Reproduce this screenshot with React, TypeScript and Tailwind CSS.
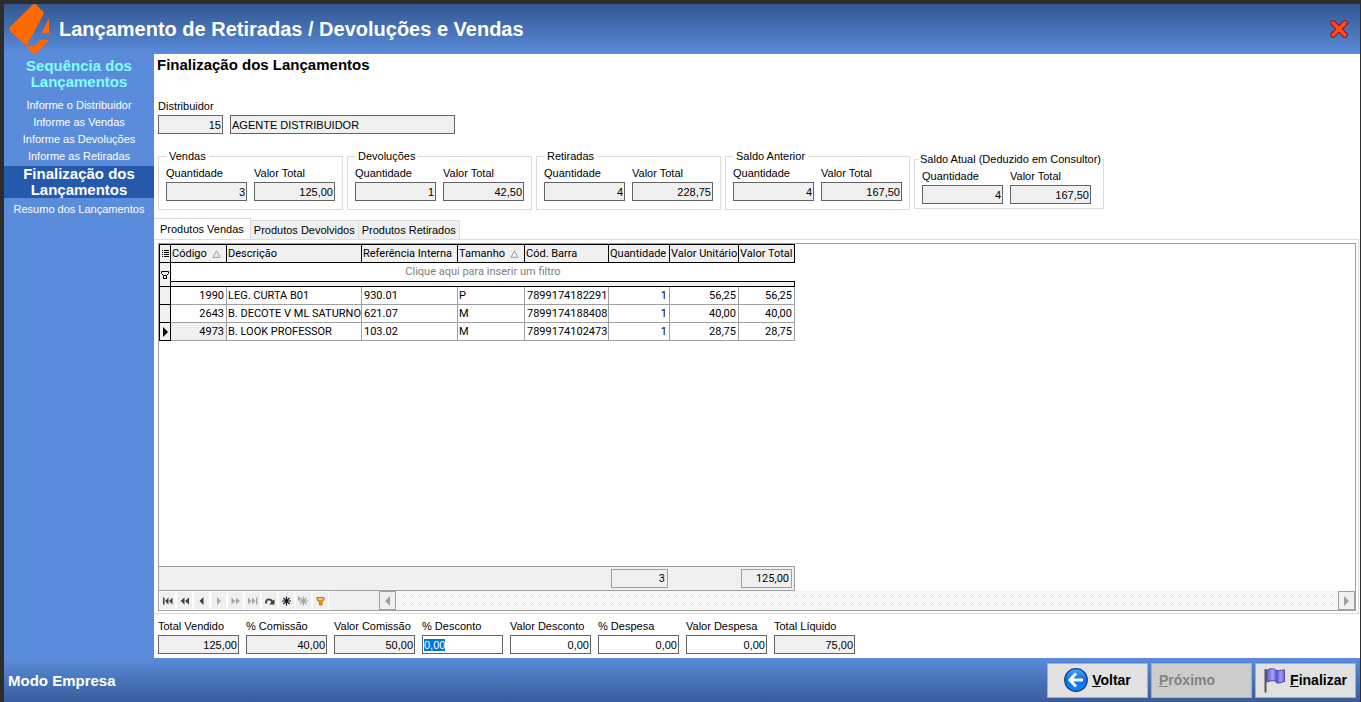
import { useEffect, useId, useRef, useState } from "react";
import type { ReactNode } from "react";

type FieldProps = {
  label: string;
  value: string;
  editable?: boolean;
  selected?: boolean;
};

type Product = {
  code: string;
  description: string;
  reference: string;
  size: string;
  barcode: string;
  quantity: string;
  unit: string;
  total: string;
};

const stepsBefore = [
  "Informe o Distribuidor",
  "Informe as Vendas",
  "Informe as Devoluções",
  "Informe as Retiradas",
];

const groups = [
  { title: "Vendas", quantity: "3", total: "125,00" },
  { title: "Devoluções", quantity: "1", total: "42,50" },
  { title: "Retiradas", quantity: "4", total: "228,75" },
  { title: "Saldo Anterior", quantity: "4", total: "167,50" },
];

const tabs = ["Produtos Vendas", "Produtos Devolvidos", "Produtos Retirados"];

const products: Product[] = [
  {
    code: "1990",
    description: "LEG. CURTA B01",
    reference: "930.01",
    size: "P",
    barcode: "7899174182291",
    quantity: "1",
    unit: "56,25",
    total: "56,25",
  },
  {
    code: "2643",
    description: "B. DECOTE V ML SATURNO",
    reference: "621.07",
    size: "M",
    barcode: "7899174188408",
    quantity: "1",
    unit: "40,00",
    total: "40,00",
  },
  {
    code: "4973",
    description: "B. LOOK PROFESSOR",
    reference: "103.02",
    size: "M",
    barcode: "7899174102473",
    quantity: "1",
    unit: "28,75",
    total: "28,75",
  },
];

const totals: FieldProps[] = [
  { label: "Total Vendido", value: "125,00" },
  { label: "% Comissão", value: "40,00" },
  { label: "Valor Comissão", value: "50,00" },
  { label: "% Desconto", value: "0,00", editable: true, selected: true },
  { label: "Valor Desconto", value: "0,00", editable: true },
  { label: "% Despesa", value: "0,00", editable: true },
  { label: "Valor Despesa", value: "0,00", editable: true },
  { label: "Total Líquido", value: "75,00" },
];

function Field({ label, value, editable, selected }: Readonly<FieldProps>) {
  const id = useId();
  const ref = useRef<HTMLInputElement>(null);

  useEffect(() => {
    if (selected) {
      ref.current?.focus();
      ref.current?.select();
    }
  }, [selected]);

  return (
    <div className="flex w-[81px] flex-col gap-px">
      <label htmlFor={id} className="whitespace-nowrap leading-4">
        {label}
      </label>
      <input
        id={id}
        ref={ref}
        defaultValue={value}
        readOnly={!editable}
        className={`h-[19px] w-full border border-[#646464] px-px leading-4 outline-none selection:bg-[#0078d7] selection:text-white ${
          editable ? "bg-white" : "bg-[#f0f0f0]"
        } ${selected ? "text-left" : "text-right"}`}
      />
    </div>
  );
}

function Logo() {
  return (
    <svg width="42" height="50" viewBox="0 0 42 50" fill="#ff6a00" aria-hidden="true">
      <path d="M23.500 .8Q25.500 -.8 27.500 .8L34 7.500Q35 9 34.500 10.500L17.500 42L1 27Q-.5 25 1 23Z" />
      <path d="M40 14V29.500H32.500Z" />
      <path d="M31 36H40L27.500 49Q25.500 50.500 23.500 49L17 42.300H24.500Q27.500 41 31 36Z" />
    </svg>
  );
}

function CloseIcon() {
  return (
    <svg width="18" height="18" viewBox="0 0 18 18" aria-hidden="true">
      <path d="M3 3L15 15M15 3L3 15" stroke="#a30d08" strokeWidth="5.600" strokeLinecap="round" />
      <path d="M3 3L15 15M15 3L3 15" stroke="#ff4a26" strokeWidth="3.600" strokeLinecap="round" />
    </svg>
  );
}

function BackIcon() {
  return (
    <svg width="24" height="24" viewBox="0 0 24 24" fill="none" aria-hidden="true">
      <defs>
        <linearGradient id="ball" x1="0" y1="0" x2="0" y2="1">
          <stop offset="0" stopColor="#4aa5f5" />
          <stop offset=".5" stopColor="#0d6fe0" />
          <stop offset="1" stopColor="#0a8cf0" />
        </linearGradient>
      </defs>
      <circle cx="12" cy="12" r="11.300" fill="url(#ball)" stroke="#0b3f94" strokeWidth="1.200" />
      <path d="M12 5.500L5.800 12L12 18.500M6.500 12H19" stroke="#fff" strokeWidth="3" />
    </svg>
  );
}

function FlagIcon() {
  return (
    <svg width="22" height="25" viewBox="0 0 22 25" aria-hidden="true">
      <defs>
        <linearGradient id="flag">
          <stop offset="0" stopColor="#5a52d0" />
          <stop offset=".35" stopColor="#a9a6ff" />
          <stop offset=".55" stopColor="#5a52d0" />
          <stop offset=".8" stopColor="#a09cfa" />
          <stop offset="1" stopColor="#6a64d8" />
        </linearGradient>
      </defs>
      <path
        d="M2.500 2.500Q6 0 9.500 .8Q11.500 1.200 12 2.500Q15 2.800 20.500 1.800V13.500Q16 15.500 12.500 15L11.500 13Q7 12 2.500 14Z"
        fill="url(#flag)"
        stroke="#3d3798"
        strokeWidth=".8"
      />
      <path d="M1.500 1V24.500" stroke="#555" strokeWidth="2" />
    </svg>
  );
}

function SortMark() {
  return (
    <svg width="9" height="8" viewBox="0 0 9 8" fill="none" aria-hidden="true">
      <path d="M4.500 .8L8 7.300H1Z" stroke="#a0a0a0" />
    </svg>
  );
}

const navButtons = [
  { name: "Primeiro", color: "#404040", path: "M1 1.500H2.500V8.500H1ZM6.500 1.500V8.500L3 5ZM10.500 1.500V8.500L7 5Z" },
  { name: "Página anterior", color: "#404040", path: "M5.500 1.500V8.500L1.500 5ZM10 1.500V8.500L6 5Z" },
  { name: "Anterior", color: "#404040", path: "M7.500 1V9L3.500 5Z" },
  { name: "Próximo", color: "#a8a8a8", path: "M4 1V9L8 5Z" },
  { name: "Próxima página", color: "#a8a8a8", path: "M1.500 1.500V8.500L5.500 5ZM6 1.500V8.500L10 5Z" },
  { name: "Último", color: "#a8a8a8", path: "M1 1.500V8.500L4.500 5ZM5 1.500V8.500L8.500 5ZM9 1.500H10.500V8.500H9Z" },
  { name: "Atualizar", color: "#404040", path: "M1 7.500Q1 2.500 5 2.500Q7.500 2.500 8.500 4.500L10.500 3.500V8.500H5.500L7.300 6Q6.500 4.200 4.800 4.200Q3 4.200 3 7.500Z" },
];

function Star({ color }: Readonly<{ color: string }>) {
  return (
    <path
      d="M5.500 .5V9.500M1 5H10M2.300 1.800L8.700 8.200M8.700 1.800L2.300 8.200"
      stroke={color}
      strokeWidth="1.200"
    />
  );
}

function NavButton({ name, children }: Readonly<{ name: string; children: ReactNode }>) {
  return (
    <button
      type="button"
      aria-label={name}
      className="flex w-[17px] items-center justify-center border border-white bg-[#f0f0f0]"
    >
      <svg width="11" height="10" viewBox="0 0 11 10" fill="none" aria-hidden="true">
        {children}
      </svg>
    </button>
  );
}

function ScrollButton({ name, path }: Readonly<{ name: string; path: string }>) {
  return (
    <button
      type="button"
      aria-label={name}
      className="flex w-[17px] items-center justify-center border border-[#a0a0a0] bg-[#f0f0f0]"
    >
      <svg width="7" height="10" viewBox="0 0 7 10" fill="#a0a0a0" aria-hidden="true">
        <path d={path} />
      </svg>
    </button>
  );
}

function ProductTable() {
  const head = "border-t border-r border-b border-black bg-[#f0f0f0] px-px text-left font-normal";
  const cell = "border-r border-b border-[#a0a0a0] py-0";

  return (
    <table className="w-[636px] table-fixed border-separate border-spacing-0 whitespace-nowrap leading-4">
      <colgroup>
        <col className="w-[12px]" />
        <col className="w-[56px]" />
        <col className="w-[135px]" />
        <col className="w-[96px]" />
        <col className="w-[67px]" />
        <col className="w-[84px]" />
        <col className="w-[61px]" />
        <col className="w-[69px]" />
        <col className="w-[56px]" />
      </colgroup>
      <thead>
        <tr className="h-[19px]">
          <th className="border border-black bg-[#f0f0f0] p-0" aria-label="Colunas">
            <svg width="10" height="10" viewBox="0 0 10 10" className="block" aria-hidden="true">
              <path d="M2 1.500H3M4 1.500H9M2 3.500H3M4 3.500H9M2 5.500H3M4 5.500H9M2 7.500H3M4 7.500H9" stroke="#000" />
            </svg>
          </th>
          <th className={head}>
            <span className="flex items-center justify-between pr-1">
              Código <SortMark />
            </span>
          </th>
          <th className={head}>Descrição</th>
          <th className={head}>Referência Interna</th>
          <th className={head}>
            <span className="flex items-center justify-between pr-1">
              Tamanho <SortMark />
            </span>
          </th>
          <th className={head}>Cód. Barra</th>
          <th className={head}>Quantidade</th>
          <th className={head}>Valor Unitário</th>
          <th className={head}>Valor Total</th>
        </tr>
      </thead>
      <tbody>
        <tr className="h-[19px]">
          <td rowSpan={2} className="border-r border-b border-l border-black bg-[#f0f0f0] p-0">
            <svg width="10" height="10" viewBox="0 0 10 10" fill="none" className="block" aria-hidden="true">
              <path d="M1.500 1.500H8.500V3.500L6.500 5.500H3.500L1.500 3.500ZM3.500 5.500V8.500H6.500V5.500" stroke="#000" />
            </svg>
          </td>
          <td colSpan={8} className="border-b border-black p-0 text-center text-[#808080]">
            Clique aqui para inserir um filtro
          </td>
        </tr>
        <tr className="h-[5px]">
          <td colSpan={8} className="border-r border-b border-black bg-[#f0f0f0] p-0" />
        </tr>
        {products.map((product, index) => {
          const current = index === products.length - 1;
          return (
            <tr key={product.code} className="h-[18px]">
              <td className="border-r border-b border-l border-black bg-[#f0f0f0] p-0">
                {current && (
                  <svg width="10" height="10" viewBox="0 0 10 10" className="block" aria-hidden="true">
                    <path d="M3 0V10L8 5Z" />
                  </svg>
                )}
              </td>
              <td className={`${cell} pr-0.5 text-right ${current ? "bg-[#f0f0f0]" : ""}`}>
                {product.code}
              </td>
              <td className={`${cell} pl-px`}>{product.description}</td>
              <td className={`${cell} pl-0.5`}>{product.reference}</td>
              <td className={`${cell} pl-px`}>{product.size}</td>
              <td className={`${cell} pl-0.5`}>{product.barcode}</td>
              <td className={`${cell} pr-0.5 text-right`}>{product.quantity}</td>
              <td className={`${cell} pr-0.5 text-right`}>{product.unit}</td>
              <td className={`${cell} pr-0.5 text-right`}>{product.total}</td>
            </tr>
          );
        })}
      </tbody>
    </table>
  );
}

export default function App() {
  const [activeTab, setActiveTab] = useState(tabs[0]);
  const bigButton =
    "flex h-[35px] w-[101px] items-center border border-[#adadad] text-[14px] font-bold";

  return (
    <div className="flex min-h-screen flex-col border-t-4 border-r border-l-4 border-[#2d2d2d] bg-[#5b8cdb] font-['Liberation_Sans',Arial,sans-serif] text-[11px] text-black">
      <header className="flex h-[50px] items-center justify-between bg-linear-to-b from-[#335791] to-[#5b8cdb] pr-3 pl-[5px]">
        <div className="flex items-center gap-2">
          <Logo />
          <h1 className="text-[20px] font-bold text-white">
            Lançamento de Retiradas / Devoluções e Vendas
          </h1>
        </div>
        <button type="button" aria-label="Fechar">
          <CloseIcon />
        </button>
      </header>

      <div className="flex flex-1">
        <nav className="w-[150px] shrink-0 pt-1 text-center text-white">
          <h2 className="px-4 text-[15px] leading-4 font-bold text-[#80ffff]">
            Sequência dos Lançamentos
          </h2>
          <ol className="pt-[7px]">
            {stepsBefore.map((step) => (
              <li key={step} className="leading-[17px]">
                {step}
              </li>
            ))}
            <li
              aria-current="step"
              className="mt-px bg-[#2459ab] px-4 text-[15px] leading-4 font-bold"
            >
              Finalização dos Lançamentos
            </li>
            <li className="pt-[3px] leading-[17px]">Resumo dos Lançamentos</li>
          </ol>
        </nav>

        <main className="flex min-w-0 flex-1 flex-col bg-white">
          <h2 className="px-[3px] pt-px text-[15px] leading-5 font-bold">
            Finalização dos Lançamentos
          </h2>

          <div className="mt-[23px] flex flex-col gap-px px-1">
            <label htmlFor="distributor" className="leading-4">
              Distribuidor
            </label>
            <div className="flex gap-[7px]">
              <input
                id="distributor"
                readOnly
                defaultValue="15"
                className="h-[19px] w-[65px] border border-[#646464] bg-[#f0f0f0] px-px text-right"
              />
              <input
                aria-label="Nome do distribuidor"
                readOnly
                defaultValue="AGENTE DISTRIBUIDOR"
                className="h-[19px] w-[225px] border border-[#646464] bg-[#f0f0f0] px-px"
              />
            </div>
          </div>

          <div className="mt-[15px] flex items-end gap-1 px-1">
            {groups.map((group) => (
              <fieldset key={group.title} className="w-[185px] border border-[#dcdcdc] px-[7px] pb-2">
                <legend className="px-[3px] leading-[15px]">{group.title}</legend>
                <div className="flex gap-[7px] pt-px">
                  <Field label="Quantidade" value={group.quantity} />
                  <Field label="Valor Total" value={group.total} />
                </div>
              </fieldset>
            ))}
            <fieldset className="mb-px w-[190px] border border-[#dcdcdc] pb-1">
              <legend className="ml-1 px-px leading-[15px] whitespace-nowrap">
                Saldo Atual (Deduzido em Consultor)
              </legend>
              <div className="flex gap-[7px] px-[7px] pt-px">
                <Field label="Quantidade" value="4" />
                <Field label="Valor Total" value="167,50" />
              </div>
            </fieldset>
          </div>

          <div role="tablist" className="mt-2 flex items-end">
            {tabs.map((tab) => (
              <button
                key={tab}
                type="button"
                role="tab"
                aria-selected={tab === activeTab}
                onClick={() => setActiveTab(tab)}
                className={`border-t border-r border-[#dcdcdc] whitespace-nowrap ${
                  tab === activeTab
                    ? "-mb-px h-[22px] bg-white px-1.5"
                    : "h-[19px] bg-[#f0f0f0] px-[3px]"
                }`}
              >
                {tab}
              </button>
            ))}
          </div>

          <div className="mr-px flex flex-1 flex-col border-t border-r border-b border-[#dcdcdc] pt-[3px] pr-0.5 pb-0.5 pl-1">
            <div className="flex flex-1 flex-col border border-[#a0a0a0] font-['Roboto','Liberation_Sans',sans-serif]">
              <div className="flex-1 overflow-x-auto">
                <ProductTable />
              </div>
              <div className="flex h-[25px] w-[636px] items-center justify-end gap-[73px] border-t border-r border-b border-[#a0a0a0] bg-[#f0f0f0] pr-0.5 text-right leading-[17px]">
                <output className="w-[57px] border border-[#a0a0a0] px-0.5">3</output>
                <output className="w-[51px] border border-[#a0a0a0] px-0.5">125,00</output>
              </div>
              <div className="flex h-[19px] bg-[repeating-conic-gradient(#ececec_0_25%,#ffffff_0_50%)] bg-[length:2px_2px]">
                <div className="flex w-[220px] bg-[#f0f0f0]">
                  {navButtons.map((button) => (
                    <NavButton key={button.name} name={button.name}>
                      <path d={button.path} fill={button.color} />
                    </NavButton>
                  ))}
                  <NavButton name="Inserir">
                    <Star color="#101020" />
                  </NavButton>
                  <NavButton name="Acrescentar">
                    <path d="M0 0V5L3 2.500Z" fill="#a0a0a0" />
                    <Star color="#a0a0a0" />
                  </NavButton>
                  <NavButton name="Filtrar">
                    <path d="M2 1.500H9V4L7 6V9H4.500V6L2 4Z" fill="#f58a1f" stroke="#e07000" />
                    <path d="M3.500 3H7.500" stroke="#fff" />
                  </NavButton>
                </div>
                <ScrollButton name="Rolar para a esquerda" path="M6 0V10L1 5Z" />
                <div className="flex-1" />
                <ScrollButton name="Rolar para a direita" path="M1 0V10L6 5Z" />
              </div>
            </div>
          </div>

          <div className="flex flex-wrap gap-[7px] p-1">
            {totals.map((field) => (
              <Field key={field.label} {...field} />
            ))}
          </div>
        </main>
      </div>

      <footer className="flex h-11 items-center justify-between bg-linear-to-b from-[#5b8cdb] to-[#385d9c] px-1">
        <span className="pt-0.5 text-[15px] font-bold text-white">Modo Empresa</span>
        <div className="flex gap-[3px]">
          <button type="button" className={`${bigButton} justify-center gap-1 bg-[#e1e1e1]`}>
            <BackIcon />
            <span className="pt-px">
              <u>V</u>oltar
            </span>
          </button>
          <button type="button" disabled className={`${bigButton} bg-[#cccccc] pl-[7px] text-[#838383]`}>
            <span className="pt-px">
              <u>P</u>róximo
            </span>
          </button>
          <button type="button" className={`${bigButton} justify-center gap-1 bg-[#e1e1e1]`}>
            <FlagIcon />
            <span className="pt-px">
              <u>F</u>inalizar
            </span>
          </button>
        </div>
      </footer>
    </div>
  );
}
